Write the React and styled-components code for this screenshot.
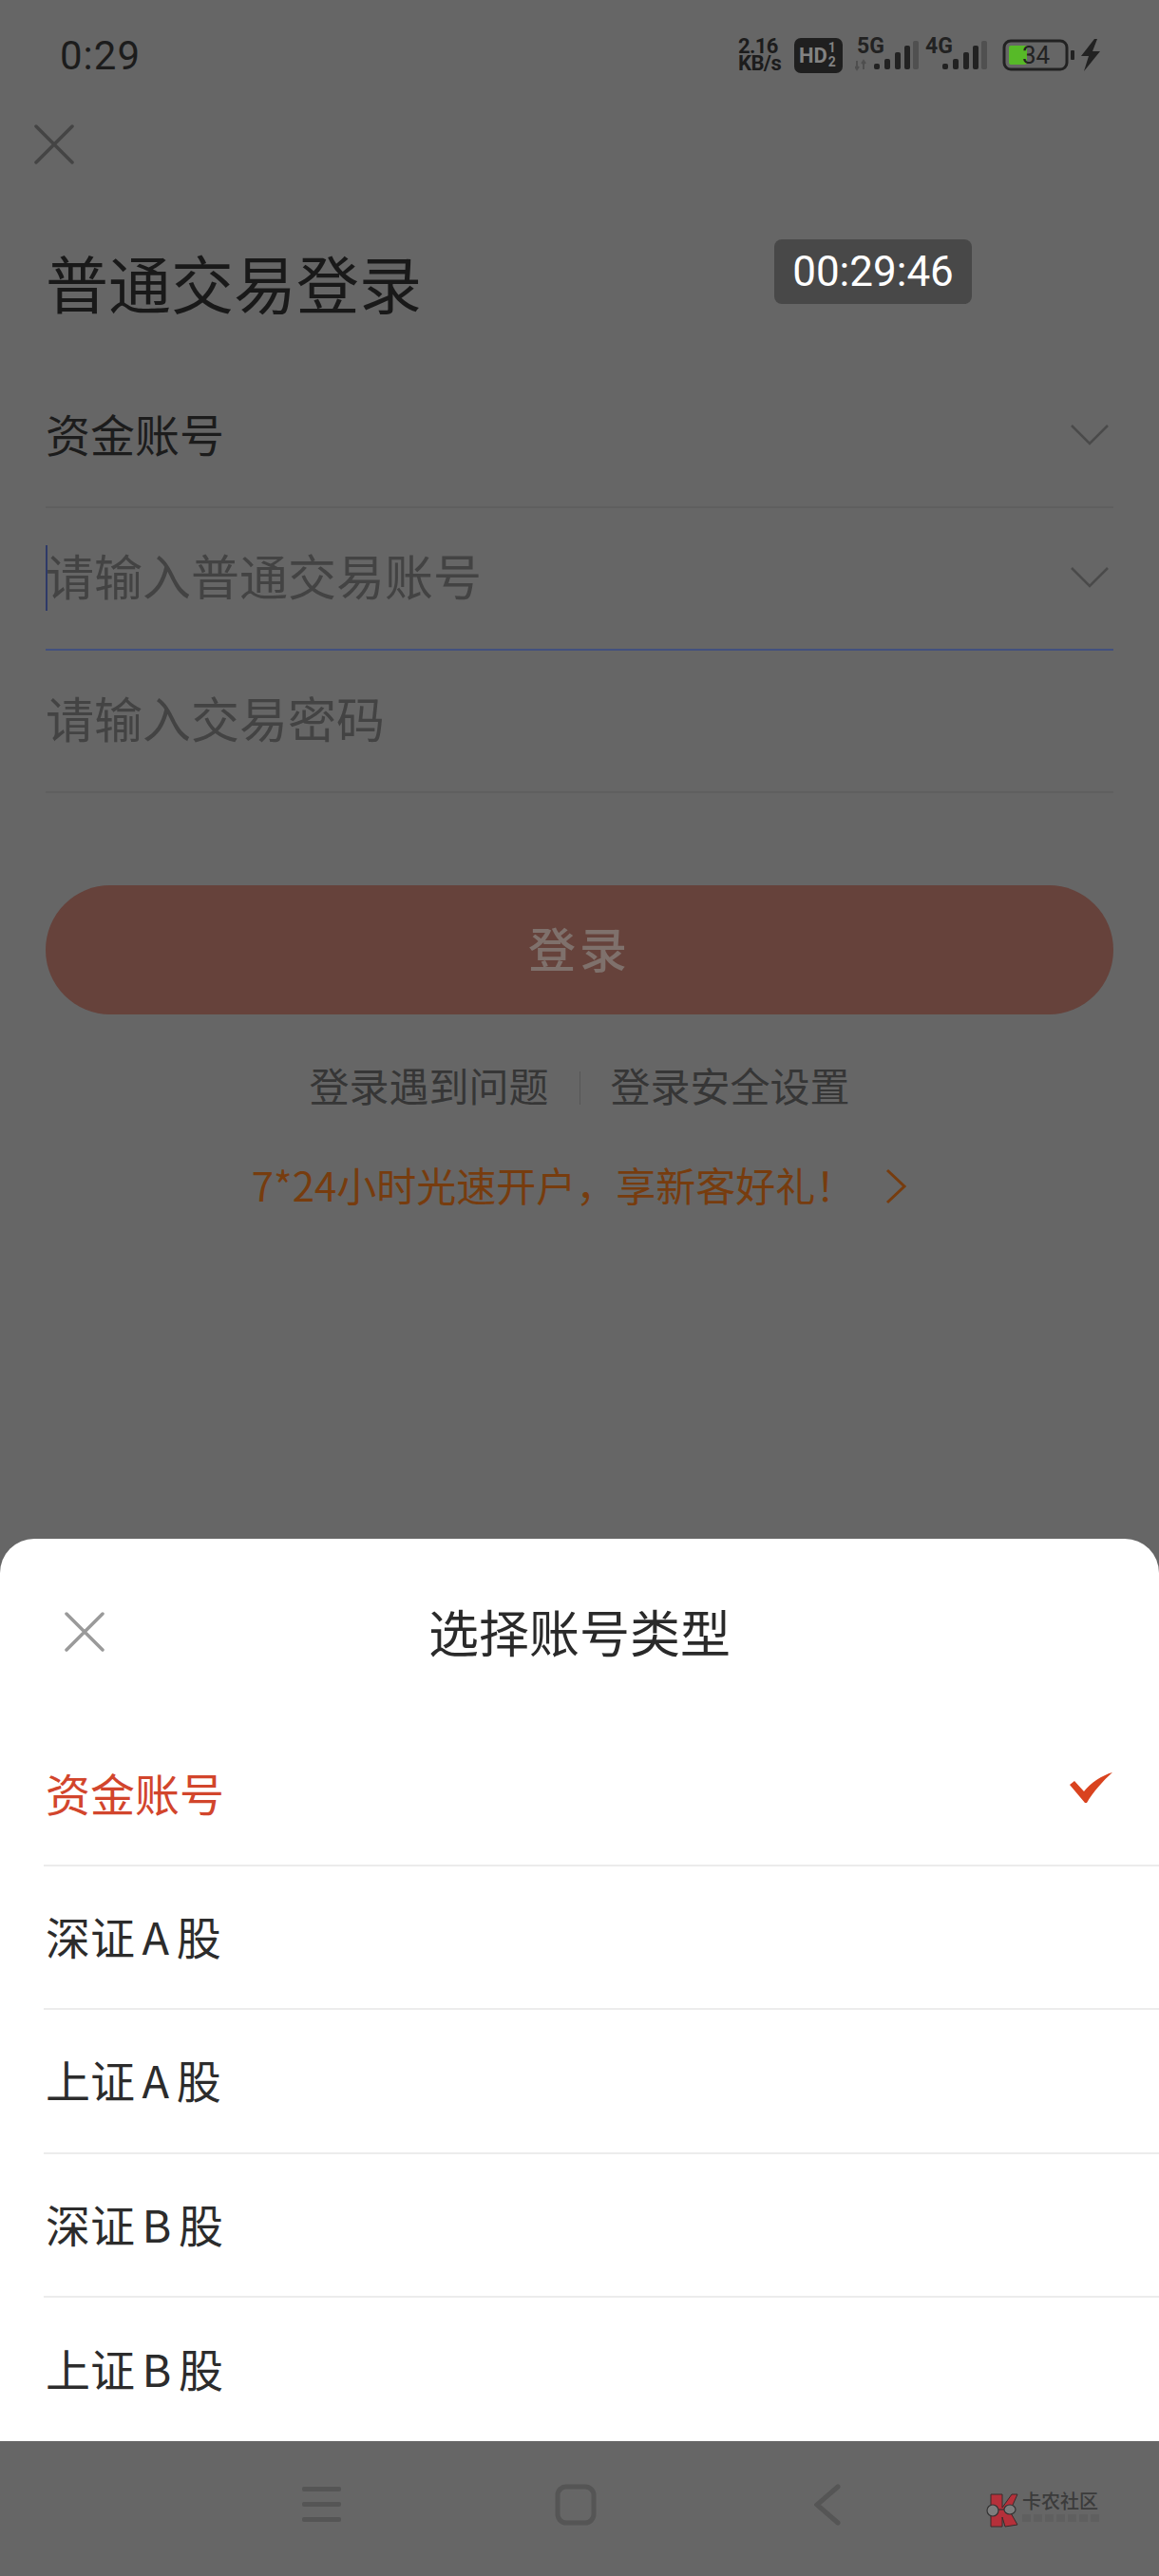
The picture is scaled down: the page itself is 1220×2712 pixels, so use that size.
import React from "react";
import styled, { createGlobalStyle } from "styled-components";

const Global = createGlobalStyle`
  html, body { margin: 0; padding: 0; background: #666; }
  * { box-sizing: border-box; }
  body { font-family: "Noto Sans CJK SC", "Noto Sans", sans-serif; }
`;

const Page = styled.div`
  position: relative;
  width: 1220px;
  height: 2712px;
  background: #666;
  display: flex;
  flex-direction: column;
  overflow: hidden;
`;

const Login = styled.div`
  flex: 1;
  padding: 0 48px;
`;

const StatusBar = styled.div`
  height: 116px;
  margin-right: 13px;
  padding-left: 15px;
  display: flex;
  align-items: center;
  justify-content: space-between;
  color: #1c1c1c;
`;

const Time = styled.span`
  font-family: Roboto, sans-serif;
  font-size: 42px;
  letter-spacing: 1px;
`;

const StatusIcons = styled.div`
  display: flex;
  align-items: center;
`;

const Speed = styled.div`
  width: 51px;
  font-family: Roboto, sans-serif;
  font-weight: 700;
  font-size: 22px;
  line-height: 18px;
  white-space: nowrap;
  letter-spacing: -0.6px;
`;

const HdBadge = styled.div`
  width: 51px;
  height: 37px;
  margin-left: 8px;
  background: #1f1f1f;
  border-radius: 7px;
  color: #828282;
  font-family: Roboto, sans-serif;
  font-weight: 700;
  font-size: 22px;
  display: flex;
  align-items: center;
  padding-left: 5px;
  gap: 1px;
`;

const HdFraction = styled.span`
  font-size: 14px;
  line-height: 15px;
  display: flex;
  flex-direction: column;
`;

const CloseButton = styled.button`
  display: block;
  margin: 15px 0 0 -12px;
  padding: 0;
  width: 42px;
  height: 42px;
  background: none;
  border: 0;
  color: ${(p) => p.$color};
`;

const Title = styled.h1`
  margin: 83px 0 0;
  height: 80px;
  font-size: 66px;
  line-height: 80px;
  font-weight: 400;
  color: #191919;
`;

const Fields = styled.div`
  margin-top: 49px;
`;

const Field = styled.div`
  position: relative;
  height: 150px;
  padding: 0 4px 3px 0;
  display: flex;
  align-items: center;
  justify-content: space-between;
  border-bottom: 2px solid ${(p) => (p.$focus ? "#42507e" : "#5f5f5f")};
`;

const FieldText = styled.span`
  margin-bottom: 5px;
  font-size: ${(p) => (p.$muted ? "51px" : "47px")};
  color: ${(p) => (p.$muted ? "#434343" : "#1c1c1c")};
`;

const Caret = styled.i`
  position: absolute;
  left: 0;
  top: 39px;
  width: 2px;
  height: 69px;
  background: #2e3a68;
`;

const SubmitButton = styled.button`
  display: block;
  width: 100%;
  height: 136px;
  margin-top: 97px;
  padding: 0 0 6px;
  border: 0;
  border-radius: 68px;
  background: #66423b;
  color: #7f716c;
  font-family: inherit;
  font-size: 50px;
  font-weight: 500;
  letter-spacing: 4px;
`;

const Links = styled.div`
  margin-top: 48px;
  height: 50px;
  display: flex;
  justify-content: center;
  align-items: center;
  font-size: 42px;
  color: #363636;
`;

const LinkDivider = styled.i`
  width: 1px;
  height: 35px;
  margin: 8px 32px 0;
  background: #565656;
`;

const Promo = styled.div`
  margin-top: 55px;
  height: 50px;
  display: flex;
  align-items: center;
  justify-content: center;
  gap: 31px;
  font-size: 42px;
  color: #773c0e;
  svg {
    margin-top: 6px;
  }
`;

const Timer = styled.div`
  position: absolute;
  left: 815px;
  top: 252px;
  width: 208px;
  height: 68px;
  border-radius: 8px;
  background: #484848;
  color: #fff;
  font-family: Roboto, sans-serif;
  font-size: 44px;
  display: flex;
  align-items: center;
  justify-content: center;
`;

const Sheet = styled.div`
  height: 950px;
  background: #fff;
  border-radius: 36px 36px 0 0;
`;

const SheetHeader = styled.div`
  position: relative;
  height: 194px;
  display: flex;
  align-items: center;
  justify-content: center;
`;

const SheetTitle = styled.h2`
  margin: 0;
  font-size: 53px;
  font-weight: 400;
  color: #2a2a2a;
`;

const SheetClose = styled(CloseButton)`
  position: absolute;
  left: 68px;
  top: 77px;
  margin: 0;
`;

const Option = styled.div`
  height: 151.2px;
  margin-left: 46px;
  padding: 0 48px 4px 2px;
  display: flex;
  align-items: center;
  justify-content: space-between;
  border-bottom: ${(p) => (p.$last ? "0" : "2px solid #ececec")};
  font-size: 47px;
  word-spacing: -3px;
  color: ${(p) => (p.$active ? "#d2452c" : "#2c2c2c")};
  svg {
    margin-bottom: 10px;
  }
`;

const NavBar = styled.div`
  position: relative;
  height: 142px;
  flex: none;
  background: #666;
  color: #555;
`;

const NavIcon = styled.svg`
  position: absolute;
  left: ${(p) => p.$left}px;
  top: 45px;
`;

const Watermark = styled.div`
  position: absolute;
  left: 1038px;
  top: 52px;
  display: flex;
  gap: 3px;
`;

const WatermarkText = styled.div`
  width: 82px;
  font-size: 20px;
  line-height: 22px;
  font-weight: 500;
  color: #3b3b3b;
  white-space: nowrap;
  &::after {
    content: "";
    display: block;
    height: 8px;
    margin-top: 3px;
    background: repeating-linear-gradient(90deg, #5f5f5f 0 9px, transparent 9px 12px);
  }
`;

const SignalIcon = styled.svg`
  margin-left: ${(p) => p.$gap}px;
`;

const BatteryIcon = styled.svg`
  margin-left: 15px;
`;

const Cross = () => (
  <svg width="42" height="42" viewBox="0 0 42 42" fill="none" stroke="currentColor" strokeWidth="3.5" strokeLinecap="round">
    <path d="M2 2 40 40M40 2 2 40" />
  </svg>
);

const Chevron = () => (
  <svg width="42" height="24" viewBox="0 0 42 24" fill="none" stroke="#4a4a4a" strokeWidth="2.5">
    <path d="M2 2 21 21 40 2" />
  </svg>
);

const Signal = ({ label, arrows }) => {
  const barsAt = arrows ? 20 : 19;
  const width = barsAt + 48;
  return (
    <SignalIcon $gap={arrows ? 13 : 5} width={width} height="44" viewBox={`0 0 ${width} 44`}>
      <text x={arrows ? 2 : 1} y="20" fontFamily="Roboto, sans-serif" fontWeight="700" fontSize="23" fill="#222">{label}</text>
      {arrows && <path d="M2 28v9M0 34l2 3 2-3M9 37v-9M7 31l2-3 2 3" stroke="#4f4f4f" strokeWidth="2" fill="none" />}
      <g fill="#222" transform={`translate(${barsAt} 0)`}>
        <rect x="0" y="31" width="6" height="6" rx="2" />
        <rect x="11" y="26" width="6" height="11" rx="2" />
        <rect x="22" y="19" width="6" height="18" rx="2" />
        <rect x="32" y="12" width="6" height="25" rx="2" />
        <rect x="41" y="7" width="6" height="30" rx="2" fill="#505050" />
      </g>
    </SignalIcon>
  );
};

const Battery = () => (
  <BatteryIcon width="104" height="36" viewBox="0 0 104 36">
    <rect x="2" y="3" width="66" height="30" rx="7" fill="none" stroke="#222" strokeWidth="3" />
    <rect x="7" y="8" width="19" height="20" rx="2" fill="#57ba28" />
    <text x="21" y="27" fontFamily="Roboto, sans-serif" fontSize="26" fill="#222">34</text>
    <rect x="72" y="13" width="4" height="10" rx="1" fill="#222" />
    <path d="M97 1 83 19h8l-5 16 17-21h-8l5-13z" fill="#222" />
  </BatteryIcon>
);

const LogoMark = () => (
  <svg width="35" height="42" viewBox="0 0 35 42">
    <path d="M5 4H17V18L27 4H33L25 22L33 36L20 38L17 28V38H5Z" fill="#b5303a" stroke="#3a2a2a" strokeWidth="1" />
    <ellipse cx="7" cy="21" rx="6" ry="6" fill="#7d7d7d" stroke="#333" strokeWidth="1.2" />
    <ellipse cx="25" cy="20" rx="6" ry="5" fill="#7d7d7d" stroke="#333" strokeWidth="1.2" />
    <path d="M13 20 19 20" stroke="#333" strokeWidth="1.2" />
  </svg>
);

const options = ["资金账号", "深证 A 股", "上证 A 股", "深证 B 股", "上证 B 股"];

const App = () => (
  <Page>
    <Global />
    <Login>
      <StatusBar>
        <Time>0:29</Time>
        <StatusIcons>
          <Speed>2.16<br />KB/s</Speed>
          <HdBadge>
            HD
            <HdFraction><span>1</span><span>2</span></HdFraction>
          </HdBadge>
          <Signal label="5G" arrows />
          <Signal label="4G" />
          <Battery />
        </StatusIcons>
      </StatusBar>
      <CloseButton $color="#444"><Cross /></CloseButton>
      <Title>普通交易登录</Title>
      <Fields>
        <Field><FieldText>资金账号</FieldText><Chevron /></Field>
        <Field $focus><Caret /><FieldText $muted>请输入普通交易账号</FieldText><Chevron /></Field>
        <Field><FieldText $muted>请输入交易密码</FieldText></Field>
      </Fields>
      <SubmitButton>登录</SubmitButton>
      <Links>
        <span>登录遇到问题</span>
        <LinkDivider />
        <span>登录安全设置</span>
      </Links>
      <Promo>
        <span>7*24小时光速开户，享新客好礼！</span>
        <svg width="24" height="38" viewBox="0 0 24 38" fill="none" stroke="#773c0e" strokeWidth="3">
          <path d="M3 2 21 19 3 36" />
        </svg>
      </Promo>
    </Login>
    <Timer>00:29:46</Timer>
    <Sheet>
      <SheetHeader>
        <SheetClose $color="#9a9a9a"><Cross /></SheetClose>
        <SheetTitle>选择账号类型</SheetTitle>
      </SheetHeader>
      {options.map((name, i) => (
        <Option key={name} $active={i === 0} $last={i === options.length - 1}>
          {name}
          {i === 0 && (
            <svg width="46" height="32" viewBox="0 0 46 32" fill="#d9431f">
              <path d="M0 13 5 9 15 20C22 11 34 3 45 0 35 9 25 20 18 32H16Z" />
            </svg>
          )}
        </Option>
      ))}
    </Sheet>
    <NavBar>
      <NavIcon $left={318} width="42" height="42" viewBox="0 0 42 42" fill="currentColor">
        <rect x="0" y="3" width="41" height="5" rx="2" />
        <rect x="0" y="19" width="41" height="5" rx="2" />
        <rect x="0" y="35" width="41" height="5" rx="2" />
      </NavIcon>
      <NavIcon $left={584} width="44" height="44" viewBox="0 0 44 44" fill="none" stroke="currentColor" strokeWidth="5">
        <rect x="3" y="3" width="38" height="38" rx="9" />
      </NavIcon>
      <NavIcon $left={857} width="28" height="44" viewBox="0 0 28 44" fill="none" stroke="currentColor" strokeWidth="5" strokeLinecap="round">
        <path d="M25 3 3 22 25 41" />
      </NavIcon>
      <Watermark>
        <LogoMark />
        <WatermarkText>卡农社区</WatermarkText>
      </Watermark>
    </NavBar>
  </Page>
);

export default App;
